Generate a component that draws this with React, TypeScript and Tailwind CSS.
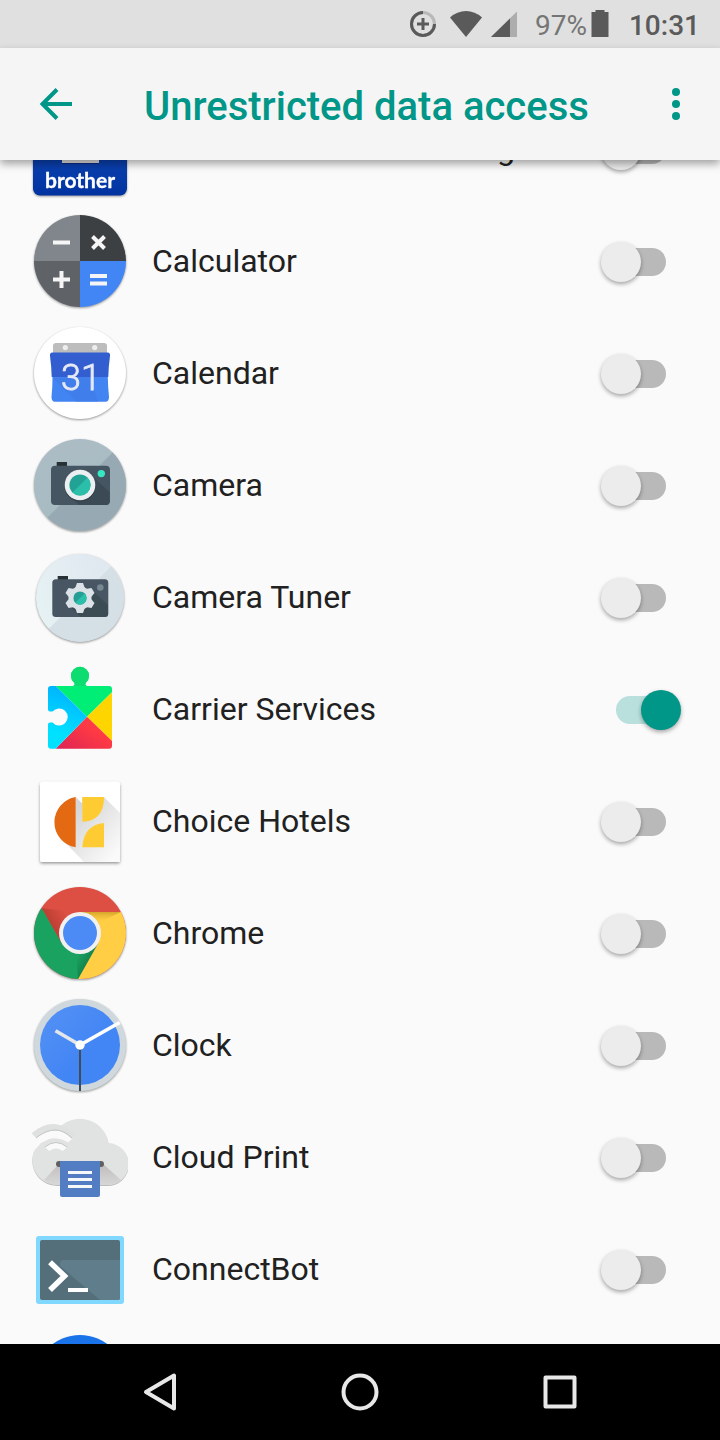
import React, { useState } from 'react';

interface AppEntry {
    name: string;
    icon: React.ReactNode;
    enabled?: boolean;
}

const IconFrame: React.FC<{ children: React.ReactNode; flat?: boolean }> = ({ children, flat }) => (
    <svg
        viewBox="0 0 96 96"
        className={flat ? 'size-24 shrink-0' : 'size-24 shrink-0 drop-shadow-[0_1px_1px_rgba(0,0,0,0.4)]'}
        aria-hidden="true"
    >
        {children}
    </svg>
);

const BrotherIcon = () => (
    <IconFrame>
        <defs>
            <linearGradient id="brotherBlue" x1="0" y1="0" x2="0" y2="1">
                <stop offset="0" stopColor="#1c56c8" />
                <stop offset="1" stopColor="#0033a0" />
            </linearGradient>
        </defs>
        <rect x="1" y="1" width="94" height="93.500" rx="7" fill="url(#brotherBlue)" />
        <rect x="30" y="30" width="37" height="33" fill="#0a2c80" />
        <rect x="30" y="30" width="37" height="32" fill="#dedede" />
        <text x="48" y="87" textAnchor="middle" fill="#fff" stroke="#fff" strokeWidth="0.3" fontFamily="Lato, sans-serif" fontWeight="700" fontSize="21">brother</text>
    </IconFrame>
);

const CalculatorIcon = () => (
    <IconFrame>
        <path d="M48 48V2A46 46 0 0 0 2 48Z" fill="#80868b" />
        <path d="M48 48V2A46 46 0 0 1 94 48Z" fill="#3c4043" />
        <path d="M48 48V94A46 46 0 0 1 2 48Z" fill="#5f6368" />
        <path d="M48 48V94A46 46 0 0 0 94 48Z" fill="#4285f4" />
        <path d="M21 29.500H38M21 66.500H38M29.500 58V75M58 63H75M58 70.500H75M60.500 23.500L72.500 35.500M72.500 23.500L60.500 35.500" stroke="#f5f5f5" strokeWidth="4" />
    </IconFrame>
);

const CalendarIcon = () => (
    <IconFrame>
        <circle cx="48" cy="48" r="46" fill="#fff" />
        <path d="M21 30V21Q21 18 24 18H72Q75 18 75 21V30Z" fill="#bdbdbd" />
        <circle cx="33.300" cy="22.600" r="2.600" fill="#eee" />
        <circle cx="62.700" cy="22.600" r="2.600" fill="#eee" />
        <path d="M20.500 27.500H75.500Q78.500 27.500 78 31Q76.500 42 76.300 52H19.700Q19.500 42 18 31Q17.500 27.500 20.500 27.500Z" fill="#335ecf" />
        <path d="M20.500 52H75.800Q76 62 77 72Q77 76.700 73.500 76.700H23Q19.500 76.700 19.500 72Q20.500 62 20.500 52Z" fill="#4384f3" />
        <path d="M21 53L44 76.700H66L58 52Z" fill="#3d78e3" opacity="0.5" />
        <text x="49" y="65" textAnchor="middle" fill="#e6eaf5" stroke="#e6eaf5" strokeWidth="0.800" fontFamily="Roboto, sans-serif" fontWeight="300" fontSize="36">31</text>
    </IconFrame>
);

const CameraIcon = () => (
    <IconFrame>
        <defs>
            <linearGradient id="cameraFace" x1="0" y1="0" x2="0.300" y2="1">
                <stop offset="0" stopColor="#acbcc5" />
                <stop offset="1" stopColor="#a6bbc2" />
            </linearGradient>
        </defs>
        <circle cx="48" cy="48" r="46" fill="url(#cameraFace)" />
        <path d="M80.500 15.500A45 45 0 0 1 15.500 80.500Z" fill="#97a9b3" />
        <rect x="24.700" y="25" width="10.300" height="5" fill="#263035" />
        <rect x="19" y="28.700" width="59" height="39.300" rx="4" fill="#455561" />
        <path d="M58 37L77.500 55V64Q77.500 68 74 68H47L37 58Z" fill="#36454f" opacity="0.65" />
        <circle cx="48" cy="49" r="15.500" fill="#28343c" opacity="0.5" />
        <circle cx="48" cy="48" r="15.300" fill="#eceff1" />
        <circle cx="48" cy="48" r="10.600" fill="#22a295" />
        <path d="M55.500 40.500A10 10 0 0 1 40.500 55.500Z" fill="#2bbfa9" />
        <circle cx="69.300" cy="36.600" r="3.700" fill="#37e8c4" />
    </IconFrame>
);

const CameraTunerIcon = () => (
    <IconFrame>
        <defs>
            <linearGradient id="tunerFace" x1="0" y1="0.700" x2="1" y2="0.300">
                <stop offset="0" stopColor="#e6f2f4" />
                <stop offset="1" stopColor="#dfe6ef" />
            </linearGradient>
        </defs>
        <circle cx="48" cy="48.700" r="44" fill="url(#tunerFace)" />
        <path d="M79.100 17.600A43 43 0 0 1 16.900 79.800Z" fill="#d5dfe6" />
        <rect x="25.700" y="27" width="10.300" height="5" fill="#263035" />
        <rect x="20.300" y="30.300" width="56" height="37.700" rx="3.500" fill="#475662" />
        <path d="M59 40L76 56V65Q76 68 73 68H49L38 58Z" fill="#38464f" opacity="0.65" />
        <g fill="#dce3e8">
            <circle cx="48" cy="49" r="11.500" />
            <path id="tunerTooth" d="M42.500 41L45 34H51L53.500 41V57L51 64H45L42.500 57Z" />
            <use href="#tunerTooth" transform="rotate(60 48 49)" />
            <use href="#tunerTooth" transform="rotate(120 48 49)" />
        </g>
        <circle cx="48" cy="49" r="6.600" fill="#259f95" />
        <path d="M52.700 44.300A6 6 0 0 1 43.300 53.700Z" fill="#2cc0aa" />
        <circle cx="68.300" cy="38.500" r="3.300" fill="#788890" />
    </IconFrame>
);

const CarrierServicesIcon = () => (
    <IconFrame flat>
        <defs>
            <linearGradient id="carrierRed" x1="1" y1="0.200" x2="0" y2="1">
                <stop offset="0.300" stopColor="#ff3a44" />
                <stop offset="1" stopColor="#dc2455" />
            </linearGradient>
            <linearGradient id="carrierBlue" x1="0.200" y1="0" x2="0" y2="1">
                <stop offset="0" stopColor="#00b4ff" />
                <stop offset="0.700" stopColor="#00e0ff" />
            </linearGradient>
        </defs>
        <g transform="translate(0 -4)">
            <path d="M23.700 29H41Q43.500 28 42 25.500A9 9 0 1 1 54 25.500Q52.500 28 55 29H77Q80 29 80 32V35.300L55 59.700Z" fill="#00ee76" />
            <path d="M42 25.500A9 9 0 1 1 54 25.500Q52 28 55 29H41Q44 28 42 25.500Z" fill="#0ddc70" />
            <path d="M80 35.300V84L55 59.700Z" fill="#ffd500" />
            <path d="M80 84V88.700Q80 91.700 77 91.700H23.700L55 59.700Z" fill="url(#carrierRed)" />
            <path d="M23.700 29L55 59.700L23.700 91.700H19Q16 91.700 16 88.700V67.500Q16 65.500 18 65.500H20.500A8.600 8.600 0 1 0 20.500 54.500H18Q16 54.500 16 52.500V32Q16 29 19 29Z" fill="url(#carrierBlue)" />
        </g>
    </IconFrame>
);

const ChoiceHotelsIcon = () => (
    <IconFrame flat>
        <defs>
            <linearGradient id="choiceShade" x1="0" y1="0" x2="1" y2="1">
                <stop offset="0.200" stopColor="#d6d6d6" />
                <stop offset="0.900" stopColor="#fafafa" />
            </linearGradient>
            <filter id="choiceDrop" x="-20%" y="-20%" width="140%" height="140%">
                <feDropShadow dx="0" dy="1.500" stdDeviation="1.500" floodOpacity="0.4" />
            </filter>
        </defs>
        <rect x="8" y="8.700" width="80" height="80.300" rx="2.500" fill="#fff" filter="url(#choiceDrop)" />
        <path d="M43.700 24L50.300 30.500V24H72L88 40V89H52L34 70.500L43.700 74.300Z" fill="url(#choiceShade)" />
        <path d="M43.700 24V74.300A25.500 25.500 0 0 1 43.700 24Z" fill="#e36a12" />
        <path d="M50.300 24H72Q72 48 50.300 48.700Z" fill="#ffcb33" />
        <path d="M72 50V74.300H50.300Q51.500 52 72 50Z" fill="#ffcb33" />
    </IconFrame>
);

const ChromeIcon = () => (
    <IconFrame>
        <defs>
            <clipPath id="chromeClip">
                <circle cx="48" cy="48" r="46" />
            </clipPath>
            <linearGradient id="chromeRedShade" gradientUnits="userSpaceOnUse" x1="20" y1="41" x2="36" y2="32">
                <stop offset="0" stopColor="#9e2e24" stopOpacity="0.5" />
                <stop offset="1" stopColor="#9e2e24" stopOpacity="0" />
            </linearGradient>
            <linearGradient id="chromeYellowShade" gradientUnits="userSpaceOnUse" x1="70" y1="27" x2="70" y2="36">
                <stop offset="0" stopColor="#b98b1c" stopOpacity="0.6" />
                <stop offset="1" stopColor="#d9a82e" stopOpacity="0" />
            </linearGradient>
            <linearGradient id="chromeGreenShade" gradientUnits="userSpaceOnUse" x1="56" y1="76" x2="46" y2="70">
                <stop offset="0" stopColor="#0c6b40" stopOpacity="0.5" />
                <stop offset="1" stopColor="#0c6b40" stopOpacity="0" />
            </linearGradient>
        </defs>
        <g clipPath="url(#chromeClip)">
            <rect width="96" height="96" fill="#dd4f43" />
            <path d="M9.700 23.300L29.800 58.500L48 48V27Z" fill="url(#chromeRedShade)" />
            <path d="M9 22L29.800 58.500L66 59L46 95H0V22Z" fill="#1aa260" />
            <path d="M66.200 58.500L46 95L44 68Z" fill="url(#chromeGreenShade)" />
            <path d="M48 27H96V96H45L66.200 58.500L60 40Z" fill="#ffce44" />
            <path d="M48 27H89L66 38Z" fill="url(#chromeYellowShade)" />
        </g>
        <circle cx="48" cy="48" r="21" fill="#f1f1f1" />
        <circle cx="48" cy="48" r="17" fill="#4c8bf5" />
    </IconFrame>
);

const ClockIcon = () => (
    <IconFrame>
        <defs>
            <linearGradient id="clockFace" x1="0" y1="0" x2="1" y2="1">
                <stop offset="0" stopColor="#5592f5" />
                <stop offset="0.600" stopColor="#4285f4" />
            </linearGradient>
        </defs>
        <circle cx="48" cy="48" r="46" fill="#cfd8dc" />
        <circle cx="48" cy="48" r="40" fill="url(#clockFace)" />
        <path d="M48 48V94" stroke="#424c55" strokeWidth="2" />
        <path d="M48 48L23.500 33.800" stroke="#e4e7ea" strokeWidth="3.600" />
        <path d="M48 48L87.700 25.500" stroke="#fff" strokeWidth="3.600" />
        <circle cx="48" cy="48" r="4.700" fill="#fff" />
    </IconFrame>
);

const CloudPrintIcon = () => (
    <IconFrame flat>
        <defs>
            <linearGradient id="cloudShade" x1="0" y1="0" x2="0" y2="1">
                <stop offset="0" stopColor="#b5b2b0" />
                <stop offset="1" stopColor="#d4d4d4" />
            </linearGradient>
        </defs>
        <path d="M25 77A25 25 0 0 1 8 34L34 14A29 29 0 0 1 76.500 35A21 21 0 0 1 75 77Z" fill="#bcbcbc" />
        <path d="M25 76A25 25 0 0 1 8 33L30 16A29 29 0 0 1 76.500 34A21 21 0 0 1 75 76Z" fill="#e1e2e2" />
        <path d="M26 56L12 71Q18 76 25 76H28V56Z" fill="url(#cloudShade)" opacity="0.7" />
        <path d="M70 54L89 71Q83 76 75 76H68V54Z" fill="url(#cloudShade)" opacity="0.8" />
        <path d="M0 24Q12 15 24 15.500Q36 16 45 28L30 38L4 36Z" fill="#e1e2e2" />
        <path d="M-1 24L4 29Q24 14 41 29L33 36Q24 26 9 34L0 44Z" fill="#fafafa" />
        <path d="M2 26Q22 9 42 28" fill="none" stroke="#dfe0e0" strokeWidth="5.500" />
        <path d="M4 29Q24 13 40 29" fill="none" stroke="#c4c4c4" strokeWidth="1" />
        <path d="M1 47Q12 27 25 29.500Q36 31 39 37L35 50H1Z" fill="#e1e2e2" />
        <path d="M13 38Q24 29 35 38L31 42Q24 37 17 42Z" fill="#fafafa" />
        <path d="M13 38Q24 29 35 38" fill="none" stroke="#c4c4c4" strokeWidth="1" />
        <rect x="24" y="52" width="48" height="6" rx="3" fill="#606060" />
        <path d="M28 52H68V86Q68 88 66 88H30Q28 88 28 86Z" fill="#537dc3" />
        <path d="M36 63.500H60M36 70.500H60M36 77.500H60" stroke="#f5f7fb" strokeWidth="3" />
    </IconFrame>
);

const ConnectBotIcon = () => (
    <IconFrame flat>
        <rect x="4" y="15" width="88" height="68" rx="3" fill="#80d8ff" />
        <rect x="8" y="19" width="80" height="60" rx="2" fill="#546e7a" />
        <path d="M31 39H88V77Q88 79 86 79H68L28 45V42Q28 39 31 39Z" fill="#607d8b" />
        <path d="M36 54L68 79H34L22 67Z" fill="#546e7a" />
        <path d="M18 41.300L32.500 55L18 69" fill="none" stroke="#fff" strokeWidth="5.500" />
        <rect x="36" y="67" width="20" height="4" fill="#fff" />
    </IconFrame>
);

const ContactsIcon = () => (
    <IconFrame flat>
        <circle cx="48" cy="48" r="46" fill="#1a73e8" />
        <circle cx="48" cy="38" r="11" fill="#fff" />
        <path d="M25 68Q27 54 48 54Q69 54 71 68Z" fill="#fff" />
    </IconFrame>
);

const apps: AppEntry[] = [
    { name: 'Brother Print Service Plugin', icon: <BrotherIcon /> },
    { name: 'Calculator', icon: <CalculatorIcon /> },
    { name: 'Calendar', icon: <CalendarIcon /> },
    { name: 'Camera', icon: <CameraIcon /> },
    { name: 'Camera Tuner', icon: <CameraTunerIcon /> },
    { name: 'Carrier Services', icon: <CarrierServicesIcon />, enabled: true },
    { name: 'Choice Hotels', icon: <ChoiceHotelsIcon /> },
    { name: 'Chrome', icon: <ChromeIcon /> },
    { name: 'Clock', icon: <ClockIcon /> },
    { name: 'Cloud Print', icon: <CloudPrintIcon /> },
    { name: 'ConnectBot', icon: <ConnectBotIcon /> },
    { name: 'Contacts', icon: <ContactsIcon /> },
];

const StatusBar = () => (
    <div className="flex h-12 shrink-0 items-center justify-end bg-[#e0e0e0] pr-5 text-[28px] leading-8 text-[#5a5a5a]">
        <svg viewBox="0 0 28 28" className="mr-3 size-7" fill="none" aria-hidden="true">
            <circle cx="14" cy="14" r="11.500" stroke="#b8b8b8" strokeWidth="3" />
            <path d="M14 2.500A11.500 11.500 0 1 0 25.500 14" stroke="#5a5a5a" strokeWidth="3" />
            <path d="M14 8V20M8 14H20" stroke="#5a5a5a" strokeWidth="3" />
        </svg>
        <svg viewBox="0 0 34 28" className="mr-2 h-7 w-[34px]" fill="#5a5a5a" aria-hidden="true">
            <path d="M17 27L1 7.500Q8 1 17 1Q26 1 33 7.500Z" />
        </svg>
        <svg viewBox="0 0 26 28" className="mr-[18px] h-7 w-[26px]" aria-hidden="true">
            <path d="M26 1.500V27H0Z" fill="#adadad" />
            <path d="M19 8.500V27H0Z" fill="#5a5a5a" />
        </svg>
        <span className="mr-1 pt-1 text-[#757575]">97%</span>
        <svg viewBox="0 0 18 28" className="mr-5 h-7 w-[18px]" fill="#5a5a5a" aria-hidden="true">
            <path d="M0.500 2H4.500V0H13.500V2H17.500V27H0.500Z" />
        </svg>
        <span className="pt-1 font-medium">10:31</span>
    </div>
);

const Header = () => (
    <header className="relative z-10 flex h-28 shrink-0 items-center bg-[#f5f5f5] pr-6 pl-8 text-[#009688] shadow-[0_4px_8px_rgba(0,0,0,0.35)]">
        <button type="button" aria-label="Navigate up" className="size-12">
            <svg viewBox="0 0 48 48" className="size-12" fill="none" stroke="currentColor" strokeWidth="4" aria-hidden="true">
                <path d="M40 24H11M25 9.500L10.500 24L25 38.500" />
            </svg>
        </button>
        <h1 className="ml-16 flex-1 pt-1.5 text-[40px] leading-12 font-medium">Unrestricted data access</h1>
        <button type="button" aria-label="More options" className="flex size-10 items-center justify-center">
            <svg viewBox="0 0 40 40" className="size-10" fill="currentColor" aria-hidden="true">
                <circle cx="20" cy="8" r="4" />
                <circle cx="20" cy="20" r="4" />
                <circle cx="20" cy="32" r="4" />
            </svg>
        </button>
    </header>
);

const AppRow: React.FC<{ app: AppEntry }> = ({ app }) => {
    const [enabled, setEnabled] = useState(Boolean(app.enabled));

    return (
        <li>
            <label className="flex h-28 items-center pr-[39px] pl-8">
                {app.icon}
                <span className="ml-6 flex-1 truncate text-[32px] leading-10 text-[#212121]">{app.name}</span>
                <input
                    type="checkbox"
                    checked={enabled}
                    onChange={e => setEnabled(e.target.checked)}
                    className="relative h-10 w-20 shrink-0 appearance-none before:absolute before:top-[7px] before:left-[15px] before:h-7 before:w-[50px] before:rounded-full before:bg-[#b9b9b9] after:absolute after:top-px after:left-0 after:size-10 after:rounded-full after:bg-[#ececec] after:shadow-[0_2px_4px_rgba(0,0,0,0.35)] checked:before:bg-[#b9e0dc] checked:after:left-10 checked:after:bg-[#009688]"
                />
            </label>
        </li>
    );
};

const NavigationBar = () => (
    <nav className="flex h-24 shrink-0 items-center justify-center gap-[152px] bg-black text-[#e8e8e8]">
        <button type="button" aria-label="Back" className="size-12">
            <svg viewBox="0 0 48 48" className="size-12" fill="none" stroke="currentColor" strokeWidth="4" strokeLinejoin="round" aria-hidden="true">
                <path d="M38 7.500V40.500L10 24Z" />
            </svg>
        </button>
        <button type="button" aria-label="Home" className="size-12">
            <svg viewBox="0 0 48 48" className="size-12" fill="none" stroke="currentColor" strokeWidth="4" aria-hidden="true">
                <circle cx="24" cy="24" r="16.500" />
            </svg>
        </button>
        <button type="button" aria-label="Overview" className="size-12">
            <svg viewBox="0 0 48 48" className="size-12" fill="none" stroke="currentColor" strokeWidth="4" strokeLinejoin="round" aria-hidden="true">
                <rect x="9.500" y="9.500" width="29" height="29" />
            </svg>
        </button>
    </nav>
);

export default function App() {
    return (
        <div className="flex h-screen flex-col bg-[#fafafa] font-['Roboto',sans-serif]">
            <StatusBar />
            <Header />
            <main className="min-h-0 flex-1 overflow-hidden">
                {/* list is scrolled part way into its first row */}
                <ul className="-mt-[67px]">
                    {apps.map(app => (
                        <AppRow key={app.name} app={app} />
                    ))}
                </ul>
            </main>
            <NavigationBar />
        </div>
    );
}
